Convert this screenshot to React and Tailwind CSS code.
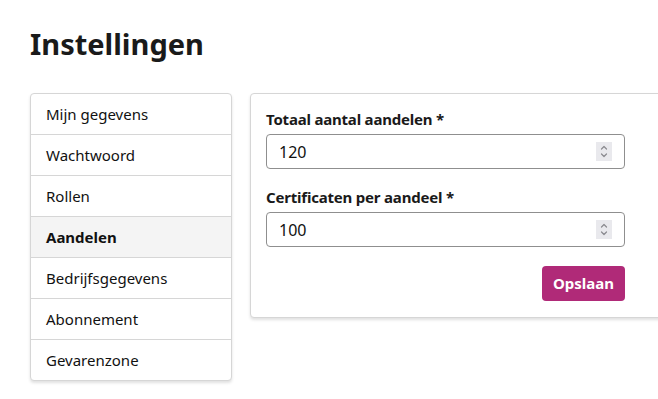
import React from "react";

const items = [
  "Mijn gegevens",
  "Wachtwoord",
  "Rollen",
  "Aandelen",
  "Bedrijfsgegevens",
  "Abonnement",
  "Gevarenzone",
];

function Spinner() {
  return (
    <div className="flex h-[19px] w-[16px] flex-col items-center justify-center bg-[#e9e9ed]">
      <svg width="10" height="15" viewBox="0 0 10 15" fill="none" stroke="#8a8a8f" strokeWidth="1.2" strokeLinecap="round" strokeLinejoin="round">
        <path d="M2.5 5 L5 2.5 L7.5 5" />
        <path d="M2.5 10 L5 12.5 L7.5 10" />
      </svg>
    </div>
  );
}

function NumberField({ label, value }) {
  return (
    <div className="flex flex-col">
      <label className="mb-[5px] text-[15px] font-bold leading-[20px] tracking-[-0.2px] text-[#1a1a1a]">{label}</label>
      <div className="flex h-[35px] w-[359px] items-center justify-between rounded-[4px] border border-[#8f8f8f] bg-white pl-[12px] pr-[12px]">
        <span className="text-[16px] text-[#111]">{value}</span>
        <Spinner />
      </div>
    </div>
  );
}

export default function App() {
  return (
    <div className="h-[399px] w-[658px] overflow-hidden bg-white text-[#111]" style={{ fontFamily: '"Noto Sans", sans-serif' }}>
      <div className="px-[30px] pt-[24px]">
        <h1 className="text-[29px] font-bold leading-[40px] text-[#1a1a1a]">Instellingen</h1>
        <div className="mt-[29px] flex items-start gap-[18px]">
          <nav className="w-[202px] shrink-0 overflow-hidden rounded-[4px] border border-[#d6d6d6] bg-white shadow-[0_2px_3px_rgba(0,0,0,0.12)]">
            {items.map((it, i) => (
              <div
                key={it}
                className={
                  "flex h-[40px] items-center pl-[15px] text-[15px] " +
                  (i > 0 ? "box-content border-t border-[#d6d6d6] " : "") +
                  (it === "Aandelen" ? "bg-[#f4f4f4] font-bold" : "")
                }
              >
                {it}
              </div>
            ))}
          </nav>
          <div className="w-[440px] shrink-0 rounded-[4px] border border-[#d6d6d6] bg-white pb-[16px] pl-[15px] pr-[16px] pt-[15px] shadow-[0_2px_3px_rgba(0,0,0,0.12)]">
            <div className="flex flex-col gap-[18px]">
              <NumberField label="Totaal aantal aandelen *" value="120" />
              <NumberField label="Certificaten per aandeel *" value="100" />
            </div>
            <div className="mt-[19px] flex w-[359px] justify-end">
              <button className="h-[35px] w-[83px] rounded-[4px] bg-[#b02a78] text-[15px] font-bold text-white">Opslaan</button>
            </div>
          </div>
        </div>
      </div>
    </div>
  );
}
